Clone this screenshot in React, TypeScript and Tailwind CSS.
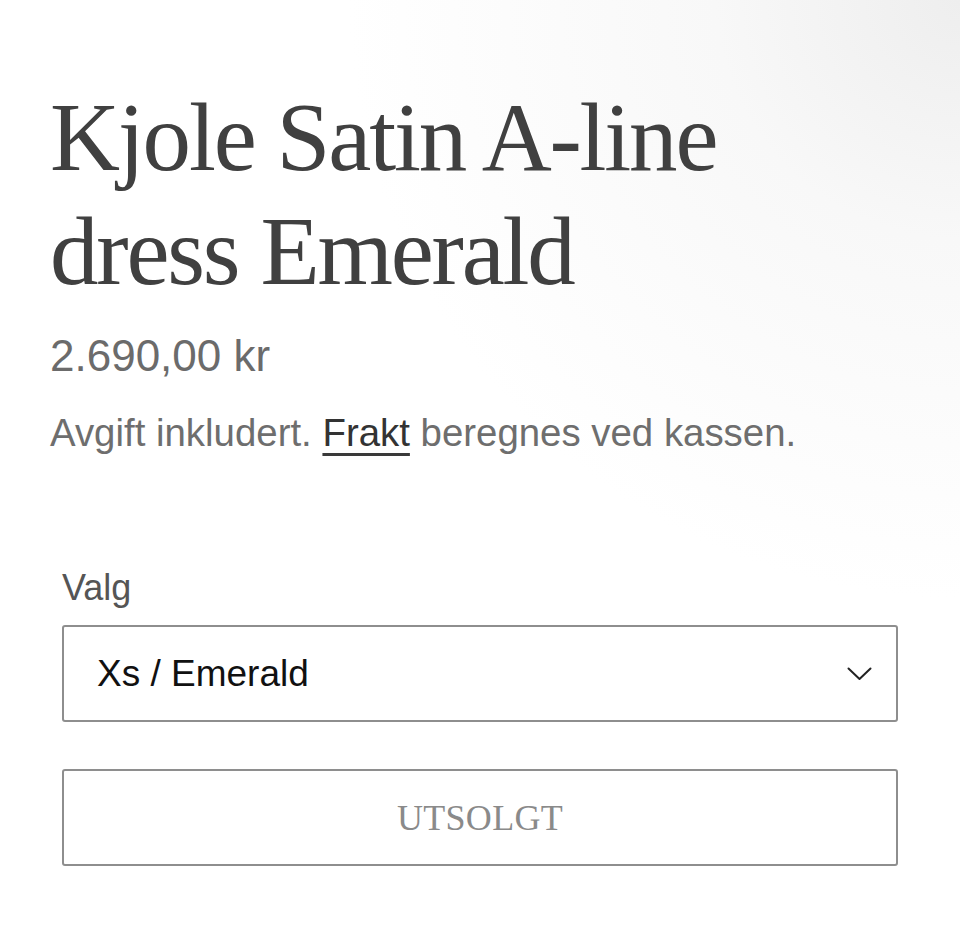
const sans = "font-['Liberation_Sans',Arial,sans-serif]";
const serif = "font-['Liberation_Serif','Times_New_Roman',serif]";

function Chevron() {
  return (
    <svg width="25" height="14" viewBox="0 0 25 14" fill="none" aria-hidden>
      <polyline points="1.5,1.5 12.5,12 23.5,1.5" stroke="#222" strokeWidth="2" strokeLinecap="round" strokeLinejoin="round" />
    </svg>
  );
}

export default function App() {
  return (
    <div className="min-h-[940px] w-[960px] overflow-hidden bg-white bg-[radial-gradient(ellipse_at_top_right,#eeeeee_0%,#f8f8f8_18%,#ffffff_45%)]">
      <div className="pl-[50px] pr-[62px] pt-[81px]">
        <h1 className={`${serif} text-[97px] leading-[114px] tracking-[-2.2px] text-[#404040]`}>
          Kjole Satin A-line
          <br />
          dress Emerald
        </h1>

        <p className={`${sans} mt-[20px] text-[44px] leading-[53px] text-[#6b6b6b]`}>2.690,00 kr</p>

        <p className={`${sans} mt-[28px] text-[38.4px] leading-[46px] text-[#6e6e6e]`}>
          Avgift inkludert.{" "}
          <a className="text-[#333] underline decoration-[#3a3a3a] decoration-[2.5px] underline-offset-[7px]">Frakt</a>{" "}
          beregnes ved kassen.
        </p>

        <div className="ml-3 mt-[110px]">
          <label className={`${sans} block text-[36px] leading-[44px] text-[#555]`}>Valg</label>

          <div className="mt-[15px] flex h-[97px] items-center justify-between rounded-[3px] border-2 border-[#8e8e8e] pl-[33px] pr-[24px]">
            <span className={`${sans} text-[37px] text-[#111]`}>Xs / Emerald</span>
            <Chevron />
          </div>

          <button
            type="button"
            disabled
            className="mt-[47px] flex h-[97px] w-full items-center justify-center rounded-[3px] border-2 border-[#8e8e8e] bg-transparent"
          >
            <span className={`${serif} text-[36px] tracking-[0.3px] text-[#8a8a8a]`}>UTSOLGT</span>
          </button>
        </div>
      </div>
    </div>
  );
}
